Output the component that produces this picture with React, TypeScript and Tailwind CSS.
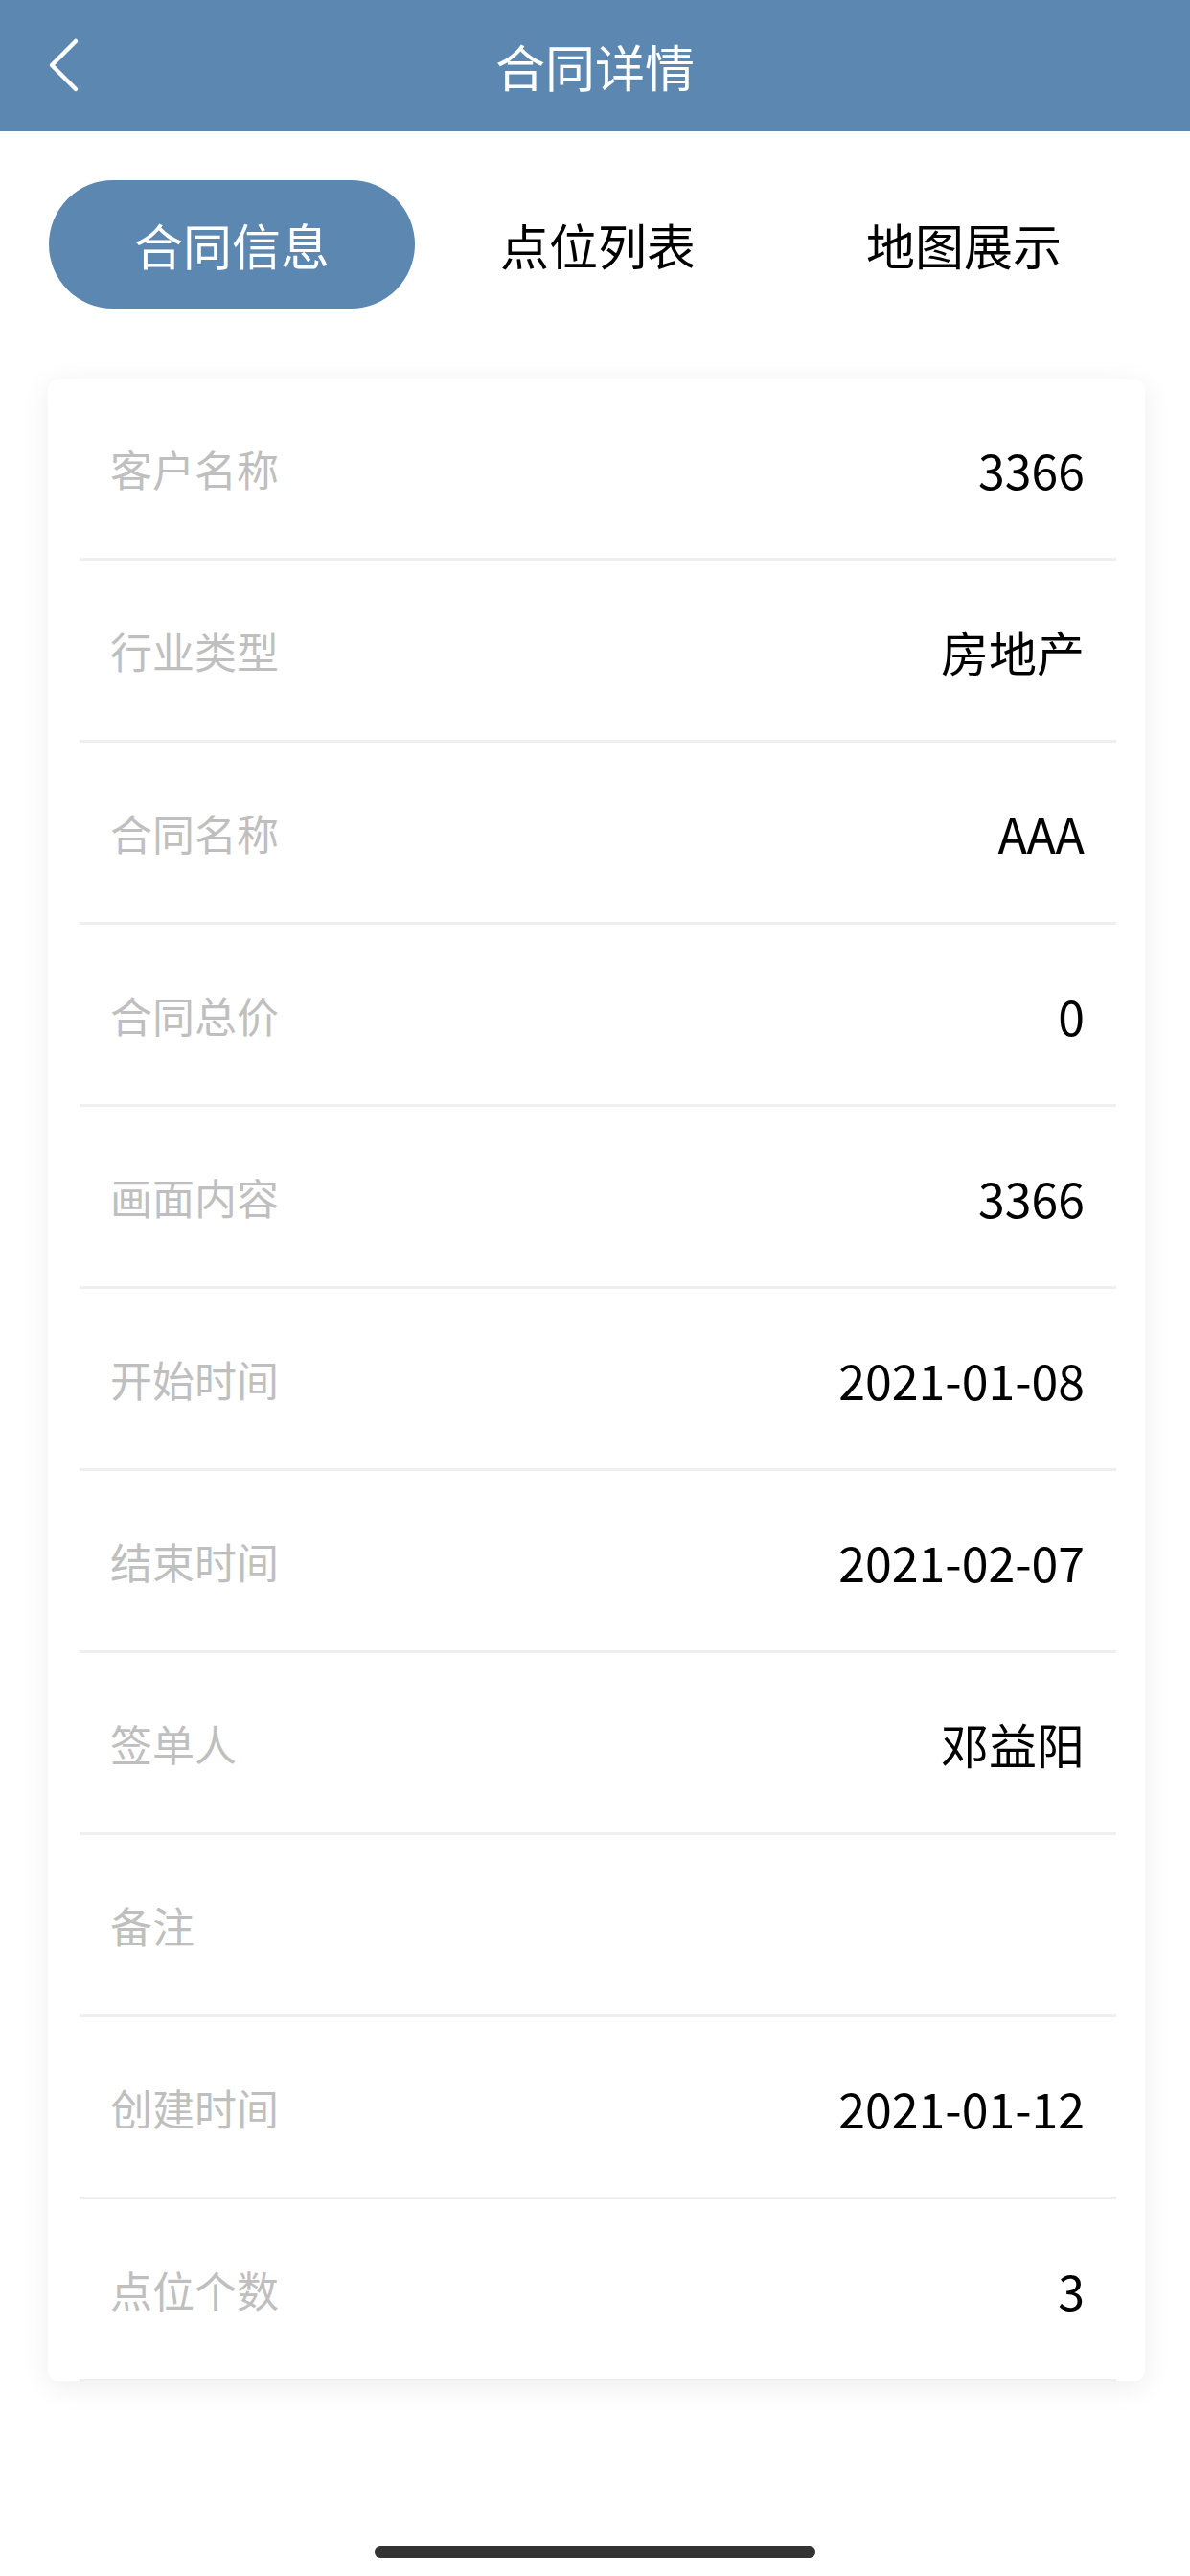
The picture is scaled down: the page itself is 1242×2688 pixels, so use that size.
import React from "react";

const rows: [string, string][] = [
  ["客户名称", "3366"],
  ["行业类型", "房地产"],
  ["合同名称", "AAA"],
  ["合同总价", "0"],
  ["画面内容", "3366"],
  ["开始时间", "2021-01-08"],
  ["结束时间", "2021-02-07"],
  ["签单人", "邓益阳"],
  ["备注", ""],
  ["创建时间", "2021-01-12"],
  ["点位个数", "3"],
];

export default function App() {
  return (
    <div
      className="w-[1242px] h-[2688px] bg-white relative overflow-hidden"
      style={{ fontFamily: '"Noto Sans CJK SC", "Noto Sans", sans-serif' }}
    >
      <header className="h-[137px] bg-[#5c87b1] relative flex items-center justify-center">
        <svg
          className="absolute left-[46px] top-[36px]"
          width="42"
          height="64"
          viewBox="0 0 42 64"
          fill="none"
        >
          <path
            d="M33 7 L8 32 L33 57"
            stroke="white"
            strokeWidth="4.5"
            strokeLinecap="round"
            strokeLinejoin="round"
          />
        </svg>
        <span className="text-white text-[52px] leading-none">合同详情</span>
      </header>

      <div className="mt-[51px] ml-[51px] mr-[45px] grid grid-cols-3 h-[134px]">
        <div className="rounded-full bg-[#5c87b1] flex items-center justify-center text-white text-[51px] leading-none">
          合同信息
        </div>
        <div className="flex items-center justify-center text-black text-[51px] leading-none">
          点位列表
        </div>
        <div className="flex items-center justify-center text-black text-[51px] leading-none">
          地图展示
        </div>
      </div>

      <div className="mt-[73px] ml-[50px] mr-[47px] bg-white rounded-[12px] shadow-[0_6px_30px_rgba(0,0,0,0.07)] overflow-hidden">
        {rows.map(([label, value]) => (
          <div
            key={label}
            className="ml-[33px] mr-[30px] h-[190px] border-b-[3px] border-[#efefef] flex items-center justify-between pl-[32px] pr-[33px]"
          >
            <span className="text-[44px] text-[#bfbfbf] leading-none">{label}</span>
            <span className="text-[50px] text-black leading-none">{value}</span>
          </div>
        ))}
      </div>

      <div className="absolute left-[391px] top-[2657px] w-[460px] h-[12px] rounded-full bg-[#333333]" />
    </div>
  );
}
